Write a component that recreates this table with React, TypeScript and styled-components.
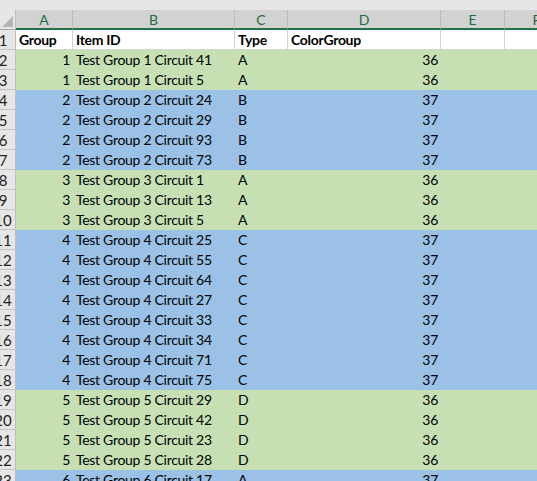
import React from "react";
import styled, { createGlobalStyle } from "styled-components";

const Global = createGlobalStyle`
  html, body { margin: 0; padding: 0; background: #ffffff; }
  body { width: 537px; height: 481px; overflow: hidden; }
`;

const COLS = "16px 57px 162px 53px 153px 64px 64px";
const FONT = `Lato, "Liberation Sans", sans-serif`;

const Sheet = styled.div`
  width: 537px;
  height: 481px;
  overflow: hidden;
  background: #ffffff;
  font-family: ${FONT};
  font-size: 14px;
  letter-spacing: -0.3px;
  color: #000;
`;

const TopStrip = styled.div`
  height: 10px;
  background: #e6e6e6;
`;

const HeaderRow = styled.div`
  display: grid;
  grid-template-columns: ${COLS};
  height: 20px;
  box-sizing: border-box;
`;

const Corner = styled.div`
  position: relative;
  background: #e6e6e6;
  border-bottom: 1px solid #a8a8a8;
  border-right: 1px solid #bdbdbd;
  box-sizing: border-box;
  &::after {
    content: "";
    position: absolute;
    right: 2px;
    bottom: 2px;
    width: 0;
    height: 0;
    border-left: 11px solid transparent;
    border-bottom: 11px solid #b4b4b4;
  }
`;

const ColHead = styled.div`
  background: #d2d2d2;
  border-right: 1px solid #bcbcbc;
  border-bottom: 2px solid #217346;
  box-sizing: border-box;
  display: flex;
  align-items: center;
  justify-content: center;
  color: #1e6b41;
  font-size: 14px;
  letter-spacing: 0;
  padding-top: 1px;
`;

const Row = styled.div<{ $fill?: string }>`
  display: grid;
  grid-template-columns: ${COLS};
  height: 20px;
  background: ${(p) => p.$fill ?? "#ffffff"};
`;

const RowHead = styled.div`
  background: #e6e6e6;
  border-bottom: 1px solid #c4c4c4;
  border-right: 1px solid #bdbdbd;
  box-sizing: border-box;
  overflow: hidden;
  color: #222;
  display: flex;
  align-items: flex-end;
  font-size: 15px;
  letter-spacing: 0;
`;

const RowNum = styled.span`
  flex: 0 0 26px;
  margin-left: -10px;
  text-align: center;
  line-height: 18px;
  height: 18px;
`;

const Cell = styled.div<{ $right?: boolean; $bold?: boolean; $grid?: boolean }>`
  box-sizing: border-box;
  border-right: 1px solid ${(p) => (p.$grid ? "#d4d4d4" : "transparent")};
  border-bottom: 1px solid ${(p) => (p.$grid ? "#d4d4d4" : "transparent")};
  padding: 0 2px 0 3px;
  display: flex;
  align-items: flex-end;
  justify-content: ${(p) => (p.$right ? "flex-end" : "flex-start")};
  font-weight: ${(p) => (p.$bold ? 700 : 400)};
  line-height: 18px;
  white-space: nowrap;
  overflow: visible;
`;

const GREEN = "#c6e0b4";
const BLUE = "#9bc2e6";

type R = [number, number, string, number];
const data: R[] = [
  [1, 41, "A", 36],
  [1, 5, "A", 36],
  [2, 24, "B", 37],
  [2, 29, "B", 37],
  [2, 93, "B", 37],
  [2, 73, "B", 37],
  [3, 1, "A", 36],
  [3, 13, "A", 36],
  [3, 5, "A", 36],
  [4, 25, "C", 37],
  [4, 55, "C", 37],
  [4, 64, "C", 37],
  [4, 27, "C", 37],
  [4, 33, "C", 37],
  [4, 34, "C", 37],
  [4, 71, "C", 37],
  [4, 75, "C", 37],
  [5, 29, "D", 36],
  [5, 42, "D", 36],
  [5, 23, "D", 36],
  [5, 28, "D", 36],
  [6, 17, "A", 37],
];

export default function App() {
  return (
    <Sheet>
      <Global />
      <TopStrip />
      <HeaderRow>
        <Corner />
        {["A", "B", "C", "D", "E", "F"].map((c) => (
          <ColHead key={c}>{c}</ColHead>
        ))}
      </HeaderRow>
      <Row>
        <RowHead>
          <RowNum>1</RowNum>
        </RowHead>
        <Cell $bold $grid>Group</Cell>
        <Cell $bold $grid>Item ID</Cell>
        <Cell $bold $grid>Type</Cell>
        <Cell $bold $grid>ColorGroup</Cell>
        <Cell $grid />
        <Cell $grid />
      </Row>
      {data.map(([g, c, t, cg], i) => (
        <Row key={i} $fill={cg === 36 ? GREEN : BLUE}>
          <RowHead>
            <RowNum>{i + 2}</RowNum>
          </RowHead>
          <Cell $right>{g}</Cell>
          <Cell>{`Test Group ${g} Circuit ${c}`}</Cell>
          <Cell>{t}</Cell>
          <Cell $right>{cg}</Cell>
          <Cell />
          <Cell />
        </Row>
      ))}
    </Sheet>
  );
}
